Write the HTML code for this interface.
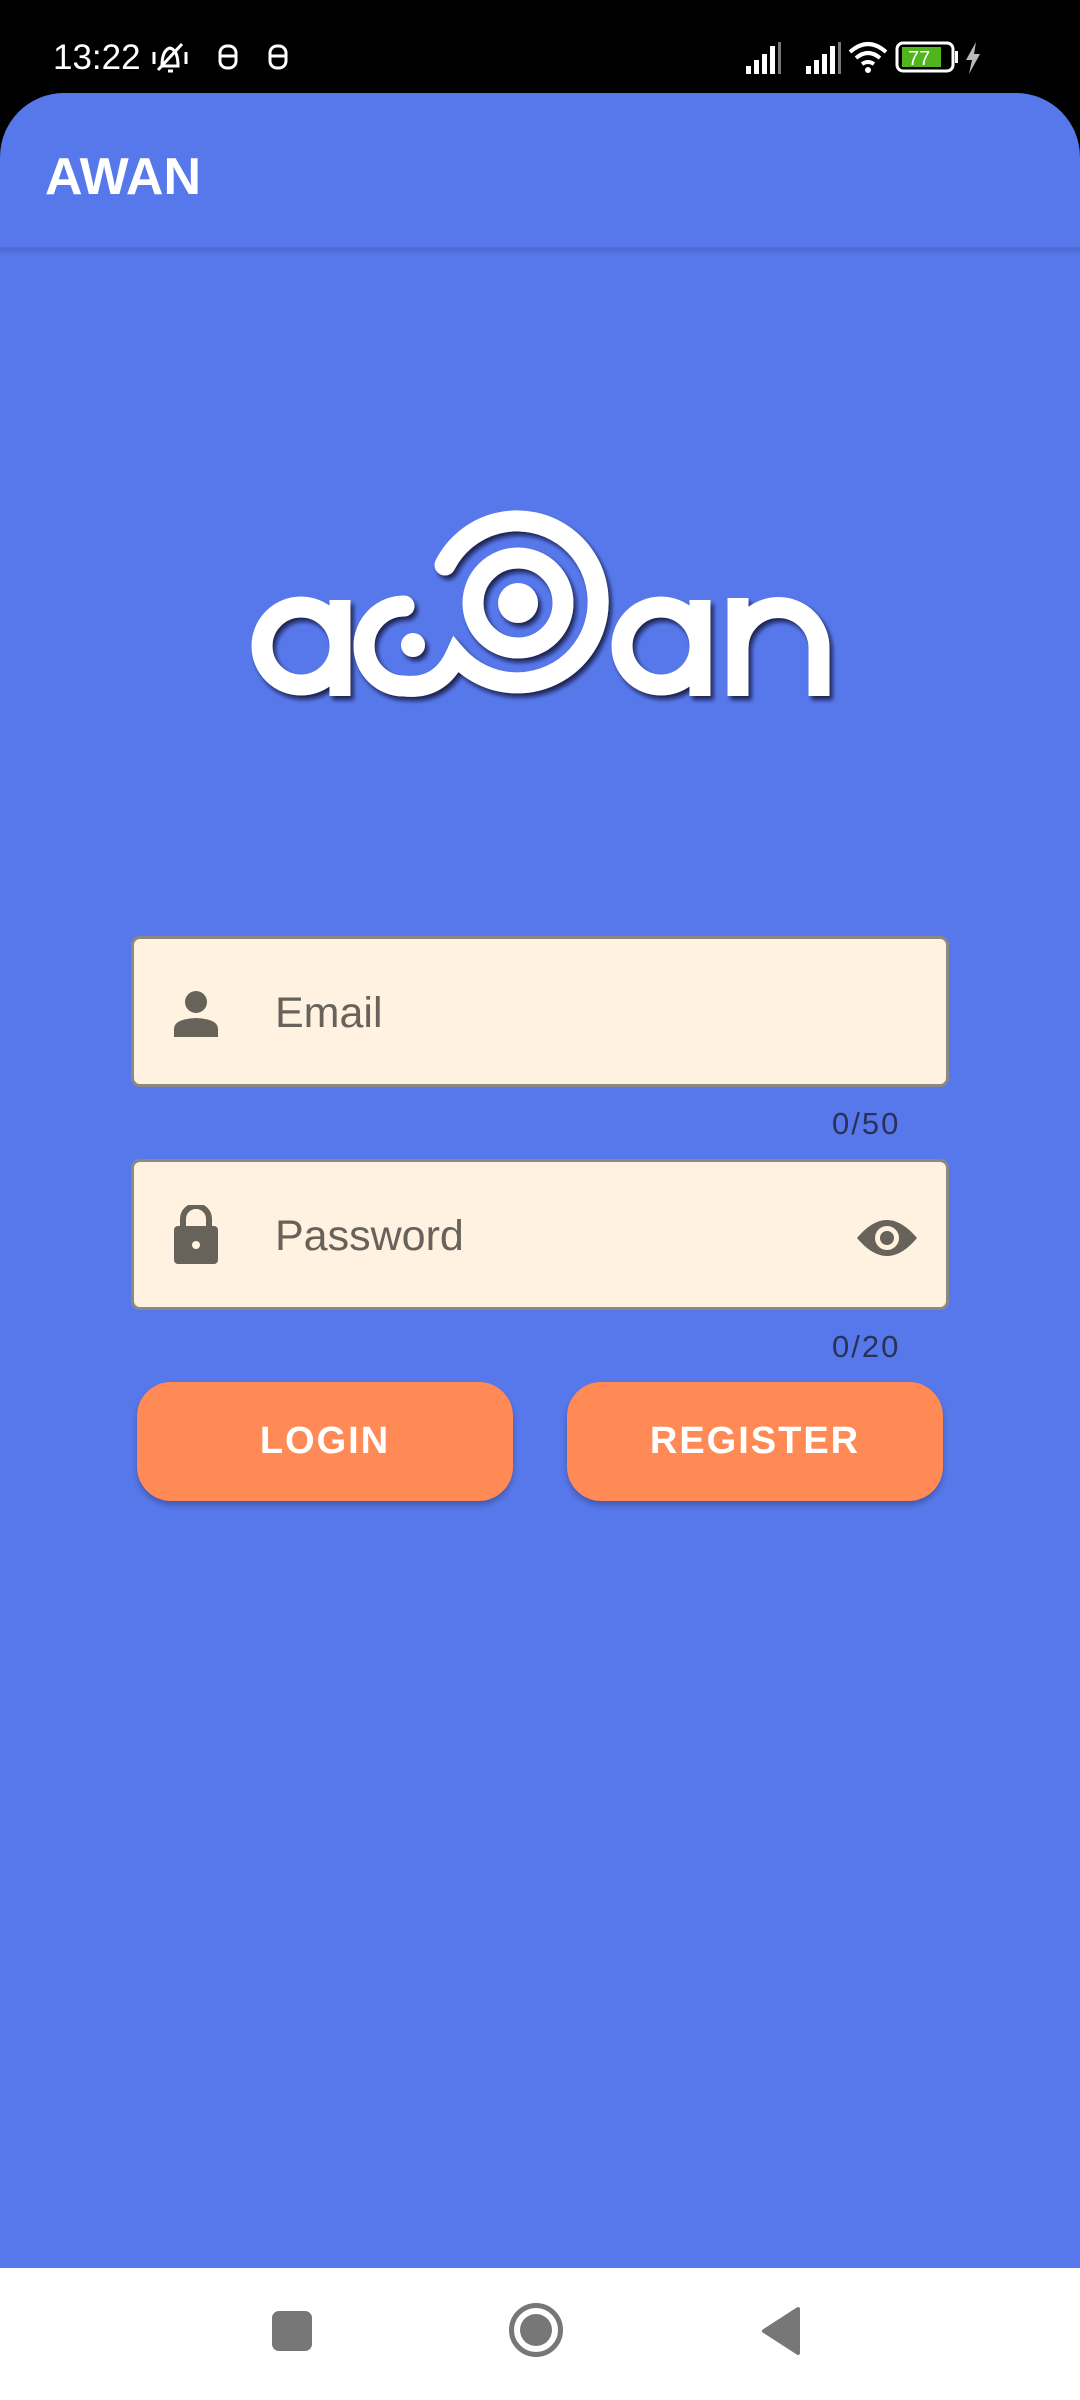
<!DOCTYPE html>
<html><head><meta charset="utf-8"><style>
html,body{margin:0;padding:0;width:1080px;height:2400px;overflow:hidden;background:#000;font-family:"Liberation Sans",sans-serif;}
.page{position:absolute;left:0;top:93px;width:1080px;height:2175px;background:#5778EA;border-radius:64px 64px 0 0;overflow:hidden}
.bar{position:absolute;left:0;top:0;width:1080px;height:154px;border-bottom:3px solid #4f6cd6;box-shadow:0 2px 4px rgba(0,0,0,.12)}
.title{position:absolute;left:45px;top:54px;color:#fff;font-size:52px;font-weight:bold;letter-spacing:0px}
.field{position:absolute;left:131px;width:818px;height:151px;background:#FFF2E0;border:3px solid #8d8882;border-radius:9px;box-sizing:border-box}
.ph{position:absolute;left:141px;top:50px;font-size:43px;color:#67625a}
.cnt{position:absolute;font-size:31px;color:#2a3057;letter-spacing:2px}
.btn{position:absolute;top:1382px;height:119px;width:376px;background:#FF8A55;border-radius:34px;box-shadow:0 4px 6px rgba(0,0,0,.25);color:#fff;font-weight:bold;font-size:38px;text-align:center;line-height:119px;letter-spacing:2px}
.status{position:absolute;top:0;left:0;width:1080px;height:93px;color:#fff}
.nav{position:absolute;left:0;top:2268px;width:1080px;height:132px;background:#fff}
</style></head><body>
<div class="status">
<div style="position:absolute;left:53px;top:38px;font-size:35px;">13:22</div>
<svg style="position:absolute;left:150px;top:38px" width="140" height="40" viewBox="0 0 140 40" fill="none" stroke="#fff" stroke-width="3">
<path d="M12 28 Q12 12 20 10 Q28 12 28 28 Z M18 33 h5"/><path d="M8 32 L32 6"/><path d="M4 14v12M36 14v12"/>
<rect x="70" y="8" width="16" height="22" rx="7"/><path d="M70 18h16"/>
<rect x="120" y="8" width="16" height="22" rx="7"/><path d="M120 18h16"/>
</svg>
<svg style="position:absolute;left:742px;top:36px" width="290" height="44" viewBox="0 0 290 44">
<g fill="#fff"><rect x="4" y="30" width="5" height="8"/><rect x="12" y="24" width="5" height="14"/><rect x="20" y="18" width="5" height="20"/><rect x="28" y="10" width="5" height="28"/><rect x="36" y="6" width="3" height="32" fill="#777"/>
<rect x="64" y="30" width="5" height="8"/><rect x="72" y="24" width="5" height="14"/><rect x="80" y="18" width="5" height="20"/><rect x="88" y="10" width="5" height="28"/><rect x="96" y="6" width="3" height="32" fill="#777"/></g>
<g fill="none" stroke="#fff" stroke-width="4"><path d="M108 16 Q126 0 144 16"/><path d="M114 22 Q126 12 138 22"/><path d="M120 28 Q126 24 132 28"/></g>
<circle cx="126" cy="34" r="3" fill="#fff"/>
<rect x="155" y="7" width="56" height="28" rx="6" fill="none" stroke="#fff" stroke-width="3"/>
<rect x="160" y="11" width="39" height="20" fill="#4fb41e"/>
<rect x="213" y="15" width="3" height="12" fill="#fff"/>
<text x="166" y="29" font-size="20" fill="#fff" font-family="Liberation Sans">77</text>
<path d="M234 6 L224 24 H230 L227 38 L238 18 H232 Z" fill="#bbb"/>
</svg>
</div>
<div class="page">
<div class="bar"><div class="title">AWAN</div></div>
<svg style="position:absolute;left:0;top:-93px" width="1080" height="900" viewBox="0 0 1080 900">
<defs><filter id="s" x="-10%" y="-10%" width="120%" height="120%"><feDropShadow dx="3" dy="4" stdDeviation="2" flood-color="#0a0a30" flood-opacity="0.8"/></filter></defs>
<g filter="url(#s)" fill="none" stroke="#fff" stroke-width="21">
<circle cx="301" cy="646" r="39"/>
<path d="M340 600 V696" stroke-linecap="butt"/>
<path d="M445 565 A81 81 0 1 1 456 655 Q440 690 404 686 A40 40 0 0 1 404 606" stroke-linecap="round"/>
<circle cx="518" cy="603" r="45"/>
<circle cx="661" cy="646" r="39"/>
<path d="M700 600 V696"/>
<path d="M738 598 V696 M738 648 A40.5 40.5 0 0 1 819 648 V696"/>
</g>
<g filter="url(#s)" fill="#fff"><circle cx="413" cy="645" r="12"/><circle cx="518" cy="603" r="20"/></g>
</svg>
<div class="field" style="top:843px">
<svg style="position:absolute;left:38px;top:52px" width="48" height="46" viewBox="0 0 48 46" fill="#67625a"><circle cx="24" cy="11" r="11"/><path d="M2 46 V38 Q2 28 24 27 Q46 28 46 38 V46 Z"/></svg>
<div class="ph">Email</div></div>
<div class="cnt" style="left:832px;top:1013px">0/50</div>
<div class="field" style="top:1066px">
<svg style="position:absolute;left:38px;top:43px" width="48" height="60" viewBox="0 0 48 60" fill="#67625a"><path d="M11 22 V14 A13 13 0 0 1 37 14 V22" fill="none" stroke="#67625a" stroke-width="6"/><rect x="2" y="21" width="44" height="38" rx="4"/><circle cx="24" cy="40" r="4" fill="#FFF2E0"/></svg>
<div class="ph">Password</div>
<svg style="position:absolute;left:722px;top:54px" width="62" height="44" viewBox="0 0 62 44"><path d="M1 22 Q31 -14 61 22 Q31 58 1 22 Z" fill="#67625a"/><circle cx="31" cy="22" r="12" fill="#FFF2E0"/><circle cx="31" cy="22" r="7" fill="#67625a"/></svg>
</div>
<div class="cnt" style="left:832px;top:1236px">0/20</div>
<div class="btn" style="left:137px;top:1289px">LOGIN</div>
<div class="btn" style="left:567px;top:1289px">REGISTER</div>
</div>
<div class="nav">
<div style="position:absolute;left:272px;top:43px;width:40px;height:40px;background:#777;border-radius:7px"></div>
<div style="position:absolute;left:509px;top:35px;width:44px;height:44px;border:5px solid #777;border-radius:50%"></div>
<div style="position:absolute;left:520px;top:46px;width:32px;height:32px;background:#777;border-radius:50%"></div>
<svg style="position:absolute;left:760px;top:38px" width="42" height="50" viewBox="0 0 42 50"><path d="M38 3 L4 25 L38 47 Z" fill="#777" stroke="#777" stroke-width="4" stroke-linejoin="round"/></svg>
</div>
</body></html>
